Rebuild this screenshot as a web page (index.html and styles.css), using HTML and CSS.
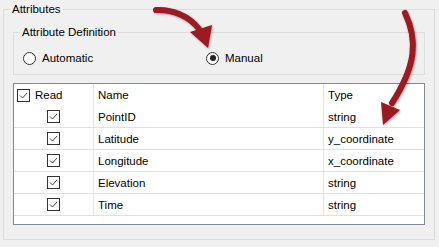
FILE: index.html
```html
<!DOCTYPE html>
<html lang="en">
<head>
  <meta charset="UTF-8" />
  <title>Attributes</title>
  <link rel="stylesheet" href="styles.css">
</head>
<body>
  <fieldset class="group">
    <legend>Attributes</legend>

    <fieldset class="group definition">
      <legend>Attribute Definition</legend>
      <div class="radios">
        <label class="radio first"><span class="dot"></span>Automatic</label>
        <label class="radio"><span class="dot checked"></span>Manual</label>
      </div>
    </fieldset>

    <div class="grid">
      <div class="row head">
        <div class="cell read"><span class="check"><svg viewBox="0 0 11 11"><polyline points="2,5.5 4.5,8 9,3" /></svg></span>Read</div>
        <div class="cell">Name</div>
        <div class="cell">Type</div>
      </div>
      <div class="row">
        <div class="cell mid"><span class="check"><svg viewBox="0 0 11 11"><polyline points="2,5.5 4.5,8 9,3" /></svg></span></div>
        <div class="cell">PointID</div>
        <div class="cell">string</div>
      </div>
      <div class="row">
        <div class="cell mid"><span class="check"><svg viewBox="0 0 11 11"><polyline points="2,5.5 4.5,8 9,3" /></svg></span></div>
        <div class="cell">Latitude</div>
        <div class="cell">y_coordinate</div>
      </div>
      <div class="row">
        <div class="cell mid"><span class="check"><svg viewBox="0 0 11 11"><polyline points="2,5.5 4.5,8 9,3" /></svg></span></div>
        <div class="cell">Longitude</div>
        <div class="cell">x_coordinate</div>
      </div>
      <div class="row">
        <div class="cell mid"><span class="check"><svg viewBox="0 0 11 11"><polyline points="2,5.5 4.5,8 9,3" /></svg></span></div>
        <div class="cell">Elevation</div>
        <div class="cell">string</div>
      </div>
      <div class="row">
        <div class="cell mid"><span class="check"><svg viewBox="0 0 11 11"><polyline points="2,5.5 4.5,8 9,3" /></svg></span></div>
        <div class="cell">Time</div>
        <div class="cell">string</div>
      </div>
    </div>
  </fieldset>

  <!-- callout arrows drawn over the dialog -->
  <svg class="arrows" width="439" height="247" viewBox="0 0 439 247">
    <g class="arrow">
      <path d="M156,10 C172,9 189,16 199,29" />
      <polygon points="190,32 212,25 208,48" />
    </g>
    <g class="arrow">
      <path d="M405,13 C418,40 416,66 392,103" />
      <polygon points="381,102 400,110 383,125" />
    </g>
  </svg>
</body>
</html>
```

FILE: styles.css
```css
/* General */
body {
  margin: 0;
  width: 439px;
  height: 247px;
  position: relative;
  overflow: hidden;
  background-color: #f0f0f0;
  font-family: "Liberation Sans", Arial, sans-serif;
  font-size: 11.5px;
  color: #000;
}

/* Group boxes */
.group {
  margin: 2px 4px 0 3px;
  padding: 9px 9px 14px 9px;
  border: 1px solid #dcdcdc;
  min-width: 0;
}

.group legend {
  margin-left: -3px;
  padding: 0 2px;
  line-height: 14px;
}

.definition {
  margin: 0;
  padding: 12px 9px 9px 9px;
}

/* Radio buttons */
.radios {
  display: flex;
  align-items: center;
  height: 14px;
}

.radio {
  display: flex;
  align-items: center;
  gap: 6px;
}

.radio.first {
  width: 183px;
}

.dot {
  width: 11px;
  height: 11px;
  border: 1px solid #333;
  border-radius: 50%;
  background: #fff;
  display: flex;
  align-items: center;
  justify-content: center;
}

.dot.checked::after {
  content: "";
  width: 6px;
  height: 6px;
  border-radius: 50%;
  background: #222;
}

/* Attribute list */
.grid {
  margin-top: 8px;
  height: 140px;
  border: 1px solid #828790;
  background: #fff;
}

.row {
  display: grid;
  grid-template-columns: 79px 230px 1fr;
  height: 22px;
  box-sizing: border-box;
  border-bottom: 1px solid #e0e0e0;
}

.row.head {
  border-bottom: none;
}

.cell {
  display: flex;
  align-items: center;
  padding-left: 4px;
  border-left: 1px solid #e3e3e3;
  white-space: nowrap;
}

.cell:first-child {
  border-left: none;
}

.read {
  padding-left: 3px;
  gap: 5px;
}

.mid {
  padding-left: 0;
  justify-content: center;
}

.check {
  width: 11px;
  height: 11px;
  border: 1px solid #333;
  background: #fff;
  display: flex;
}

.check svg {
  width: 11px;
  height: 11px;
}

.check polyline {
  fill: none;
  stroke: #444;
  stroke-width: 1;
}

/* Arrows */
.arrows {
  position: absolute;
  left: 0;
  top: 0;
  pointer-events: none;
  filter: drop-shadow(1px 1px 1px rgba(0, 0, 0, 0.35));
}

.arrow path {
  fill: none;
  stroke: #9c1a22;
  stroke-width: 6;
  stroke-linecap: round;
}

.arrow polygon {
  fill: #9c1a22;
}
```
